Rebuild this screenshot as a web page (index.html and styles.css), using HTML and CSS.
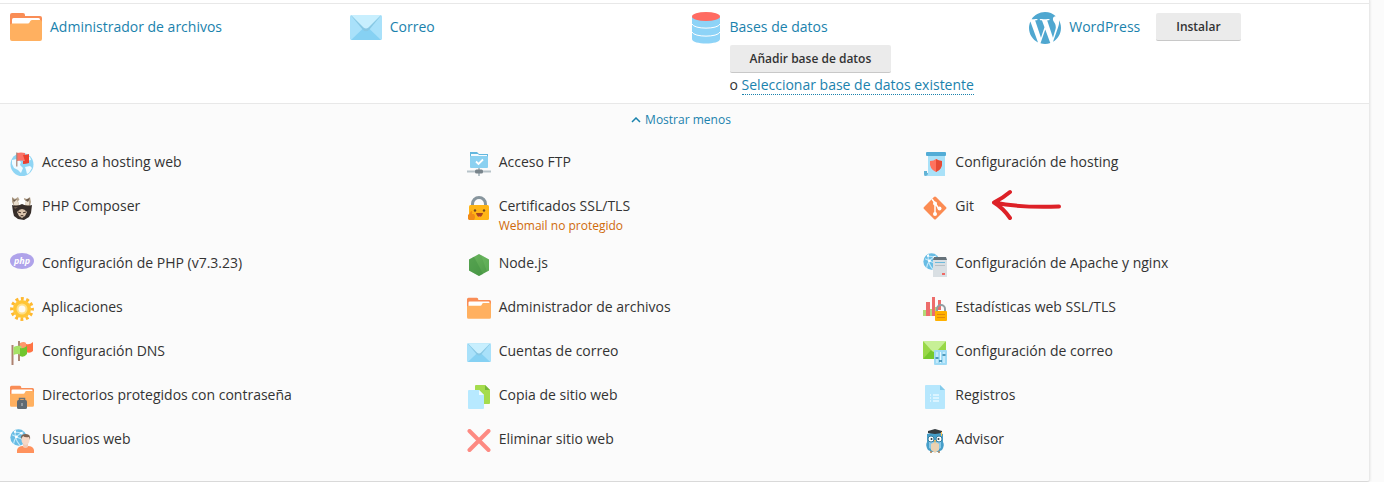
FILE: index.html
```html
<!DOCTYPE html>
<html lang="es">
<head>
<meta charset="utf-8">
<title>Sitios web y dominios</title>
<link rel="stylesheet" href="styles.css">
</head>
<body>
<svg class="sprite" aria-hidden="true">
  <defs>
    <linearGradient id="node-shade" x1="0" y1="0" x2="1" y2="1">
      <stop offset="0" stop-color="#6cb660"/><stop offset="1" stop-color="#4b9a45"/>
    </linearGradient>
    <symbol id="folder" viewBox="0 0 32 32">
      <path fill="#f98d56" d="M2 1h11q2 0 2 2v1h15q2 0 2 2v12H0V3q0-2 2-2z"/>
      <path fill="#fff" d="M3.500 6h25q1.500 0 1.500 1.500v7H2v-7Q2 6 3.500 6z"/>
      <path fill="#ffb060" d="M0 13q0-1.500 2-1.500h16q1 0 1.500-1l.5-1q.5-1.500 2-1.500h8q2 0 2 2v17q0 2-2 2H2q-2 0-2-2z"/>
    </symbol>
    <symbol id="mail" viewBox="0 0 32 32">
      <rect y="3" width="32" height="25" rx="1.500" fill="#a9e1fa"/>
      <path fill="#86d1f3" d="M1 28 13 16.500h6L31 28z"/>
      <path fill="#88c8e4" d="M1 3.500h30L19 18q-3 2.500-6 0z"/>
      <path fill="#c8effe" d="M1 3h30L18.500 15.500q-2.500 2-5 0z"/>
    </symbol>
    <symbol id="globe" viewBox="0 0 24 24">
      <circle cx="12" cy="12" r="11.500" fill="#68bce4"/>
      <path d="M3 8q9 5 18 8M8 1q-3 12 6 22M19 4Q7 9 5 21M6 5q8-2 16 5" fill="none" stroke="#c3e9fa" stroke-width="1.500"/>
      <g fill="#fff"><circle cx="9" cy="11" r="2"/><circle cx="16" cy="6" r="1.800"/><circle cx="7" cy="4" r="1.500"/></g>
    </symbol>
  </defs>
</svg>

<main class="card">
  <section class="tools">
    <div class="tool">
      <svg class="tool-icon"><use href="#folder"/></svg>
      <div class="tool-body"><a class="tool-title" href="#archivos">Administrador de archivos</a></div>
    </div>
    <div class="tool">
      <svg class="tool-icon"><use href="#mail"/></svg>
      <div class="tool-body"><a class="tool-title" href="#correo">Correo</a></div>
    </div>
    <div class="tool">
      <svg class="tool-icon" viewBox="0 0 32 32">
        <path fill="#8dd3f7" d="M2 5h28v22c0 6-28 6-28 0z"/>
        <path fill="none" stroke="#fff" d="M2 12c2 5.500 26 5.500 28 0M2 20c2 5.500 26 5.500 28 0"/>
        <ellipse cx="16" cy="4.500" rx="14" ry="4.500" fill="#ff6b62"/>
      </svg>
      <div class="tool-body">
        <a class="tool-title" href="#bases">Bases de datos</a>
        <button class="button button-below" type="button">Añadir base de datos</button>
        <p class="alternative">o <a class="dotted" href="#existente">Seleccionar base de datos existente</a></p>
      </div>
    </div>
    <div class="tool">
      <svg class="tool-icon" viewBox="1.200 1.200 21.600 21.600">
        <path fill="#4fa7d0" d="M21.469 6.825c.84 1.537 1.318 3.300 1.318 5.175 0 3.979-2.156 7.456-5.363 9.325l3.295-9.527c.615-1.540.82-2.771.82-3.864 0-.405-.026-.78-.07-1.110m-7.981.105c.647-.03 1.232-.105 1.232-.105.582-.075.514-.93-.067-.899 0 0-1.755.135-2.880.135-1.064 0-2.850-.15-2.850-.15-.585-.03-.661.855-.075.885 0 0 .54.061 1.125.09l1.680 4.605-2.370 7.080L5.354 6.900c.649-.03 1.234-.1 1.234-.1.585-.075.516-.93-.065-.896 0 0-1.746.138-2.874.138-.2 0-.438-.008-.69-.015C4.911 3.150 8.235 1.215 12 1.215c2.809 0 5.365 1.072 7.286 2.833-.046-.003-.091-.009-.141-.009-1.060 0-1.812.923-1.812 1.914 0 .89.513 1.643 1.060 2.531.411.72.89 1.643.89 2.977 0 .915-.354 1.994-.821 3.479l-1.075 3.585-3.900-11.610.001.014zM12 22.784c-1.059 0-2.081-.153-3.048-.437l3.237-9.406 3.315 9.087c.024.053.05.101.078.149-1.120.393-2.325.609-3.582.609M1.211 12c0-1.564.336-3.050.935-4.390L7.290 21.709C3.694 19.960 1.212 16.271 1.211 12"/>
      </svg>
      <div class="tool-body tool-inline">
        <a class="tool-title" href="#wordpress">WordPress</a>
        <button class="button" type="button">Instalar</button>
      </div>
    </div>
  </section>

  <section class="more">
    <button class="toggle" type="button">
      <svg class="chevron" viewBox="0 0 10 6"><path d="M1 5l4-4 4 4" fill="none" stroke="currentColor" stroke-width="1.500"/></svg>
      Mostrar menos
    </button>

    <ul class="links">
      <li class="item">
        <svg class="icon" viewBox="0 0 24 24">
          <circle cx="12" cy="12.500" r="11.500" fill="#8fd5f4"/>
          <path fill="#f1fbff" d="M2 8l5-1 4 3-1 3 3 3-2 5-3-3-4-2-2-4zM15 15l5-1 2 2-3 5-2 1-1-4zM15 4l5 1 1 3-5 1z"/>
          <path fill="#fb7368" d="M7 1q4-1 8 0v8q-4-1-8 0z"/><path fill="#ea402f" d="M13 3q3 0 6-1v9q-3 1-6 1V9h2z"/><path stroke="#a78374" stroke-width="1.200" d="M6.800.5v14"/>
        </svg>
        <a class="label" href="#hosting">Acceso a hosting web</a>
      </li>
      <li class="item">
        <svg class="icon" viewBox="0 0 24 24">
          <path fill="#b5a48e" d="M2 1l3 2 3-2 2 4 1 5H4L2 6zM14 2l3 1 3-2 1 5-1 4h-6z"/>
          <path fill="#fff" d="M8 5l4-3 4 3-1 4H9z"/>
          <path fill="#eadfcf" d="M4 5l3-1 2 5H4zM16 4l3 1v4h-4z"/>
          <path fill="#372e2a" d="M2 9q5 2 10-1 5 3 10 1l-1 8-2 4-5 3-6-1-4-3-1-4z"/>
          <path fill="#6b5a4c" d="M2 2l2 2 3-1-3 3zM15 4l5-2-2 4zM4 11h4l-3 2z"/>
          <path fill="#dac3ab" d="M7 16q5-6 10 0l-2 4-3 2-3-2z"/>
          <path d="M8 16l3 .8m2 0l3-.8M10.500 20q1.500-1 3 0" stroke="#423027" fill="none"/>
        </svg>
        <a class="label" href="#composer">PHP Composer</a>
      </li>
      <li class="item">
        <svg class="icon" viewBox="0 0 24 24">
          <ellipse cx="12" cy="8" rx="12" ry="8" fill="#afa3ea"/>
          <text class="php-mark" x="12" y="11" text-anchor="middle">php</text>
        </svg>
        <a class="label" href="#php">Configuración de PHP (v7.3.23)</a>
      </li>
      <li class="item">
        <svg class="icon" viewBox="0 0 24 24">
          <circle cx="12" cy="12" r="10.200" fill="none" stroke="#ffb82e" stroke-width="3.400" stroke-dasharray="2.900 2.441" stroke-dashoffset="1.450"/>
          <circle cx="12" cy="12" r="9" fill="#ffc535"/>
          <circle cx="12" cy="12" r="5.500" fill="#ffdf85"/>
          <circle cx="12" cy="12" r="3.500" fill="#fffaf0"/>
        </svg>
        <a class="label" href="#aplicaciones">Aplicaciones</a>
      </li>
      <li class="item">
        <svg class="icon" viewBox="0 0 24 24">
          <path stroke="#ad8975" stroke-width="2" d="M9 0v20"/>
          <path fill="#ff986a" d="M10 2q4-2 6 0l1 9q-3-2-7 0z"/><path fill="#ff7444" d="M16 3q4 1 7-2v9q-3 3-7 1z"/>
          <path stroke="#ad8270" stroke-width="2" d="M2.500 4v20"/>
          <path fill="#a5e267" d="M3.500 6q4-2 8-1v9q-4-2-8 0z"/><path fill="#70c52e" d="M10 7q3 1 7-2v8q-3 4-7 2z"/>
        </svg>
        <a class="label" href="#dns">Configuración DNS</a>
      </li>
      <li class="item">
        <svg class="icon" viewBox="0 0 24 24">
          <use href="#folder" width="24" height="24"/>
          <path d="M9.500 16v-2.500h5V16" fill="none" stroke="#66717a" stroke-width="1.500"/>
          <rect x="7" y="15" width="10" height="9" rx="1.500" fill="#606a72"/><path stroke="#c6c8c9" d="M12 18v3"/>
        </svg>
        <a class="label" href="#directorios">Directorios protegidos con contraseña</a>
      </li>
      <li class="item">
        <svg class="icon" viewBox="0 0 24 24">
          <use href="#globe" width="17" height="17"/>
          <path fill="#ff925d" d="M7 24v-3q1-4 6-4h5q5 0 6 4v3z"/>
          <path fill="#f2c9b2" d="M13 14h5v4q-2.500 2-5 0z"/><ellipse cx="15.500" cy="11" rx="4" ry="5" fill="#f8d8c5"/>
          <path fill="#806553" d="M11 10q-1-5 5-5 5 0 4 6l-1-3q-4 1-6-1z"/>
        </svg>
        <a class="label" href="#usuarios">Usuarios web</a>
      </li>
    </ul>

    <ul class="links">
      <li class="item">
        <svg class="icon" viewBox="0 0 24 24">
          <path fill="#63b7de" d="M3 0h7l2 2h9v7H3z"/><path fill="#f4fbff" d="M4 2h7l1 1h8v3H4z"/><rect x="3" y="4" width="18" height="12" rx="1" fill="#8bd1f1"/>
          <path d="M9 9.500l2.500 2.500L16 7.500" fill="none" stroke="#fff" stroke-width="1.800"/>
          <path stroke="#b7c3c9" stroke-width="2" d="M0 19.500h24M12 16v8"/><rect x="8" y="17.500" width="8" height="4" rx="1.500" fill="#78848b"/>
        </svg>
        <a class="label" href="#ftp">Acceso FTP</a>
      </li>
      <li class="item">
        <svg class="icon" viewBox="0 0 24 24">
          <path d="M5.500 12V8a6.500 6.500 0 0 1 13 0v4" fill="none" stroke="#87959d" stroke-width="3"/>
          <rect x="2" y="9" width="20" height="15" rx="1.500" fill="#ffb516"/>
          <circle cx="8" cy="14.500" r="1.200" fill="#744a20"/><circle cx="17" cy="14.500" r="1.200" fill="#744a20"/>
          <path fill="#a64420" d="M9 17h7q-1 4-3.500 4T9 17z"/><path fill="#ff6962" d="M11 20h3l-1.500 1z"/>
          <path fill="#f18b18" d="M1 23v-4l2-2 1-2q2 0 1 3h2q2 3 0 6H2z"/>
        </svg>
        <div class="label">
          <a class="plain" href="#certificados">Certificados SSL/TLS</a>
          <span class="warning">Webmail no protegido</span>
        </div>
      </li>
      <li class="item">
        <svg class="icon" viewBox="0 0 24 24">
          <path fill="url(#node-shade)" d="M12 1l10 5.500v11L12 23 2 17.500v-11z"/><path fill="#3f8e40" d="M2 17.500v-11l5-2.700L16 21l-4 2z" opacity=".45"/><path fill="#75c46a" d="M14 2l8 4.500v11l-2 1z" opacity=".35"/>
        </svg>
        <a class="label" href="#node">Node.js</a>
      </li>
      <li class="item">
        <svg class="icon"><use href="#folder"/></svg>
        <a class="label" href="#administrador">Administrador de archivos</a>
      </li>
      <li class="item">
        <svg class="icon"><use href="#mail"/></svg>
        <a class="label" href="#cuentas">Cuentas de correo</a>
      </li>
      <li class="item">
        <svg class="icon" viewBox="0 0 24 24">
          <path fill="#a5dc4d" d="M9 0h9l5 5v13q0 1-1 1H8V1q0-1 1-1z"/><path fill="#76b83a" d="M18 0v5h5z"/>
          <path fill="#b7e9ff" d="M2 5h10l5 5v13q0 1-1 1H2q-1 0-1-1V6q0-1 1-1z"/><path fill="#eefbff" d="M12 5v5h5z"/>
        </svg>
        <a class="label" href="#copia">Copia de sitio web</a>
      </li>
      <li class="item">
        <svg class="icon" viewBox="0 0 24 24"><path d="M2.500 2l19 19m0-19l-19 19" stroke="#fd8a82" stroke-width="4" stroke-linecap="round"/></svg>
        <a class="label" href="#eliminar">Eliminar sitio web</a>
      </li>
    </ul>

    <ul class="links">
      <li class="item">
        <svg class="icon" viewBox="0 0 24 24">
          <path fill="#a9e1f8" d="M5 2h17v22H2q3-1 3-5z"/><rect x="3" width="20" height="4" rx="1" fill="#52acd6"/>
          <path fill="#61b3d6" d="M1 19h3v2h1q0 3-3 3-1 0-1-2z"/>
          <path fill="#ff725e" d="M7 9q4 0 6-2 3 2 6 2 1 8-6 11Q6 17 7 9z"/><path fill="#e64a35" d="M13 7q3 2 6 2 1 8-6 11z"/>
        </svg>
        <a class="label" href="#config-hosting">Configuración de hosting</a>
      </li>
      <li class="item">
        <svg class="icon" viewBox="0 0 24 24">
          <rect x="3.500" y="3.500" width="17" height="17" rx="1.500" transform="rotate(45 12 12)" fill="#fb8b52"/>
          <path d="M9 3l3 4v11M12 7l4 6" fill="none" stroke="#fff" stroke-width="1.500"/>
          <g fill="#fff"><circle cx="12" cy="7.500" r="2"/><circle cx="12" cy="18" r="2"/><circle cx="16.500" cy="12.500" r="2"/></g>
        </svg>
        <a class="label git" href="#git">Git
          <svg class="arrow" viewBox="0 0 72 32">
            <path d="M68 17.500Q30 19 3 13.500M19 3Q12 9 3 13.500 12 19 19 29" fill="none" stroke="#dd2127" stroke-width="4" stroke-linecap="round" stroke-linejoin="round"/>
          </svg>
        </a>
      </li>
      <li class="item">
        <svg class="icon" viewBox="0 0 24 24">
          <use href="#globe" width="17" height="17"/>
          <path fill="#d9dfe3" d="M10 6h14v18H10z"/><path fill="#66727a" d="M11 4h12l1 3H10z"/><path stroke="#6dbadc" d="M12 9.500h10"/><path stroke="#b7c0c6" d="M12 12.500h10"/><path fill="#f06964" d="M19 20h3v2h-3z"/>
        </svg>
        <a class="label" href="#apache">Configuración de Apache y nginx</a>
      </li>
      <li class="item">
        <svg class="icon" viewBox="0 0 24 24">
          <path fill="#b2da78" d="M0 13h3v6H0zM7 12h2v7H7zM12 10h3v9h-3z"/><path fill="#ed6d6b" d="M3 5h4v14H3zM9 0h3v19H9zM15 3h3v10h-3z"/>
          <path d="M14 17v-5a4 4 0 0 1 8 0v5" fill="none" stroke="#929da2" stroke-width="2"/><rect x="12" y="14" width="12" height="10" rx="1" fill="#ffb100"/><path stroke="#e08a0c" d="M14 17.500h8M14 20.500h8"/>
        </svg>
        <a class="label" href="#estadisticas">Estadísticas web SSL/TLS</a>
      </li>
      <li class="item">
        <svg class="icon" viewBox="0 0 24 24">
          <rect width="23" height="18" rx="1" fill="#98d847"/><path fill="#75c92d" d="M0 18L9 8h5l9 10z"/><path fill="#c7f096" d="M0 0h23l-9 10q-2.500 2-5 0z"/>
          <rect x="11" y="9" width="13" height="15" rx="1" fill="#9fdbf6"/><path d="M14 11v11M17.500 11v11M21 11v11" stroke="#e9faff"/><path d="M12.500 17h3M16 20h3M19.500 14h3" stroke="#287fa8" stroke-width="1.500"/>
        </svg>
        <a class="label" href="#config-correo">Configuración de correo</a>
      </li>
      <li class="item">
        <svg class="icon" viewBox="0 0 24 24">
          <path fill="#b6e7fd" d="M3 0h14l5 5v18q0 1-1 1H3q-1 0-1-1V1q0-1 1-1z"/><path fill="#83caea" d="M17 0v5h5z"/>
          <path d="M7 10h1m2 0h6M7 13h1m2 0h6M7 16h1m2 0h6" stroke="#e8f9ff" stroke-width="1.500"/>
        </svg>
        <a class="label" href="#registros">Registros</a>
      </li>
      <li class="item">
        <svg class="icon" viewBox="0 0 24 24">
          <path fill="#459ec9" d="M4 5l8-2 8 2v8q2 3-1 8l-4 2H9l-4-2q-3-5-1-8z"/><path fill="#89c8e7" d="M6 13h12v6l-6 3-6-3z"/><path fill="#ead2b2" d="M8 15l4-2 4 2v6l-4 3-4-3z"/>
          <circle cx="8" cy="10" r="3" fill="#fff" stroke="#3a7f9f"/><circle cx="16" cy="10" r="3" fill="#fff" stroke="#3a7f9f"/><circle cx="8.500" cy="10" r="1" fill="#283b44"/><circle cx="15.500" cy="10" r="1" fill="#283b44"/>
          <path fill="#f8bd55" d="M11 11h2l-1 4z"/><path fill="#343c40" d="M5 2l7-2 7 2v2l-7 1-7-1z"/><path stroke="#f5bf51" d="M18.500 3v4"/><path stroke="#a67b52" stroke-width="1.500" d="M8 22v2m8-2v2"/>
        </svg>
        <a class="label" href="#advisor">Advisor</a>
      </li>
    </ul>
  </section>
</main>
</body>
</html>
```

FILE: styles.css
```css
* {
  box-sizing: border-box;
}

body {
  margin: 0;
  padding-right: 14px;
  background: #fbfbfb;
  color: #333;
  font: 14px/20px "Open Sans", sans-serif;
}

a {
  color: #1a82ad;
  text-decoration: none;
}

.sprite {
  position: absolute;
  width: 0;
  height: 0;
}

.card {
  padding-top: 3px;
  background: #fff;
  border-right: 1px solid #e9e9e9;
  border-bottom: 1px solid #d9d9d9;
  border-bottom-right-radius: 3px;
  box-shadow: 1px 0 2px #eee;
}

.tools {
  display: grid;
  grid-template-columns: repeat(4, 1fr);
  padding: 8px 0 8px 10px;
  border-top: 1px solid #e8e8e8;
}

.tool {
  display: flex;
  gap: 8px;
}

.tool-icon {
  flex: none;
  width: 32px;
  height: 32px;
}

.tool-body {
  display: flex;
  flex-direction: column;
  align-items: flex-start;
  padding-top: 1px;
}

.tool-inline {
  flex-direction: row;
  gap: 16px;
}

.tool-title {
  line-height: 28px;
}

.button {
  height: 28px;
  padding: 0 20px;
  border: 0;
  border-bottom: 1px solid #c8c8c8;
  border-radius: 2px;
  background: #ebebeb;
  color: #333;
  font: 600 12px/20px "Open Sans", sans-serif;
}

.button-below {
  margin-top: 4px;
}

.alternative {
  margin: 2px 0 0;
}

.dotted {
  border-bottom: 1px dotted #1a82ad;
}

.more {
  display: grid;
  grid-template-columns: repeat(3, 1fr);
  column-gap: 1px;
  padding: 7px 0 8px;
  border-top: 1px solid #e8e8e8;
  border-bottom-right-radius: 3px;
  background: #fbfbfb;
}

.toggle {
  grid-column: 1 / -1;
  justify-self: center;
  display: flex;
  align-items: center;
  gap: 4px;
  margin-bottom: 23px;
  padding: 0 7px 0 0;
  border: 0;
  background: none;
  color: #1a82ad;
  font: 12px/18px "Open Sans", sans-serif;
}

.chevron {
  width: 10px;
  height: 6px;
}

.links {
  margin: 0;
  padding: 0 0 0 10px;
  list-style: none;
}

.item {
  display: flex;
  gap: 8px;
  padding-bottom: 20px;
}

.links .item:nth-child(2) {
  min-height: 57px;
  padding-bottom: 16px;
}

.icon {
  flex: none;
  width: 24px;
  height: 24px;
}

.label,
.plain {
  color: #333;
}

.plain,
.warning {
  display: block;
}

.warning {
  margin-top: 1px;
  color: #cf6a0a;
  font-size: 12px;
  line-height: 17px;
}

.git {
  position: relative;
}

.arrow {
  position: absolute;
  top: -7px;
  left: 36px;
  width: 72px;
  height: 32px;
}

.php-mark {
  fill: #fff;
  font: italic bold 9px "Open Sans", sans-serif;
}
```
